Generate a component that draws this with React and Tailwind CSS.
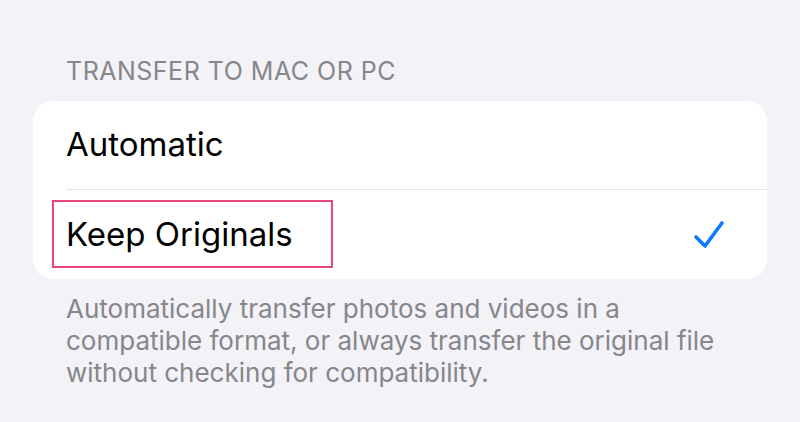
export default function App() {
    return (
        <div className="min-h-[422px] w-[800px] bg-[#f2f2f7] pt-[55px] font-['Inter',sans-serif]">
            <div className="px-[66px] text-[25px] leading-[32px] tracking-[0.5px] text-[#86868b]">
                TRANSFER TO MAC OR PC
            </div>
            <div className="mx-[33px] mt-[14px] rounded-[20px] bg-white">
                <div className="flex h-[88px] items-center pl-[33px]">
                    <span className="text-[33px] text-black">Automatic</span>
                </div>
                <div className="ml-[33px] h-px bg-[#e3e3e6]" />
                <div className="relative flex h-[89px] items-center justify-between pl-[33px] pr-[40px]">
                    <span className="text-[33px] text-black">Keep Originals</span>
                    <div className="pointer-events-none absolute left-[19px] top-[10px] h-[68px] w-[281px] border-2 border-[#e8467f]" />
                    <svg width="34" height="34" viewBox="0 0 34 34" fill="none">
                        <path d="M3 19 L12 28 L29 5" stroke="#0a7aff" strokeWidth="3.6" strokeLinecap="round" strokeLinejoin="round" />
                    </svg>
                </div>
            </div>
            <p className="mt-[14px] px-[66px] text-[26px] leading-[32px] text-[#86868b]">
                Automatically transfer photos and videos in a compatible format, or always transfer the original file without checking for compatibility.
            </p>
        </div>
    );
}
